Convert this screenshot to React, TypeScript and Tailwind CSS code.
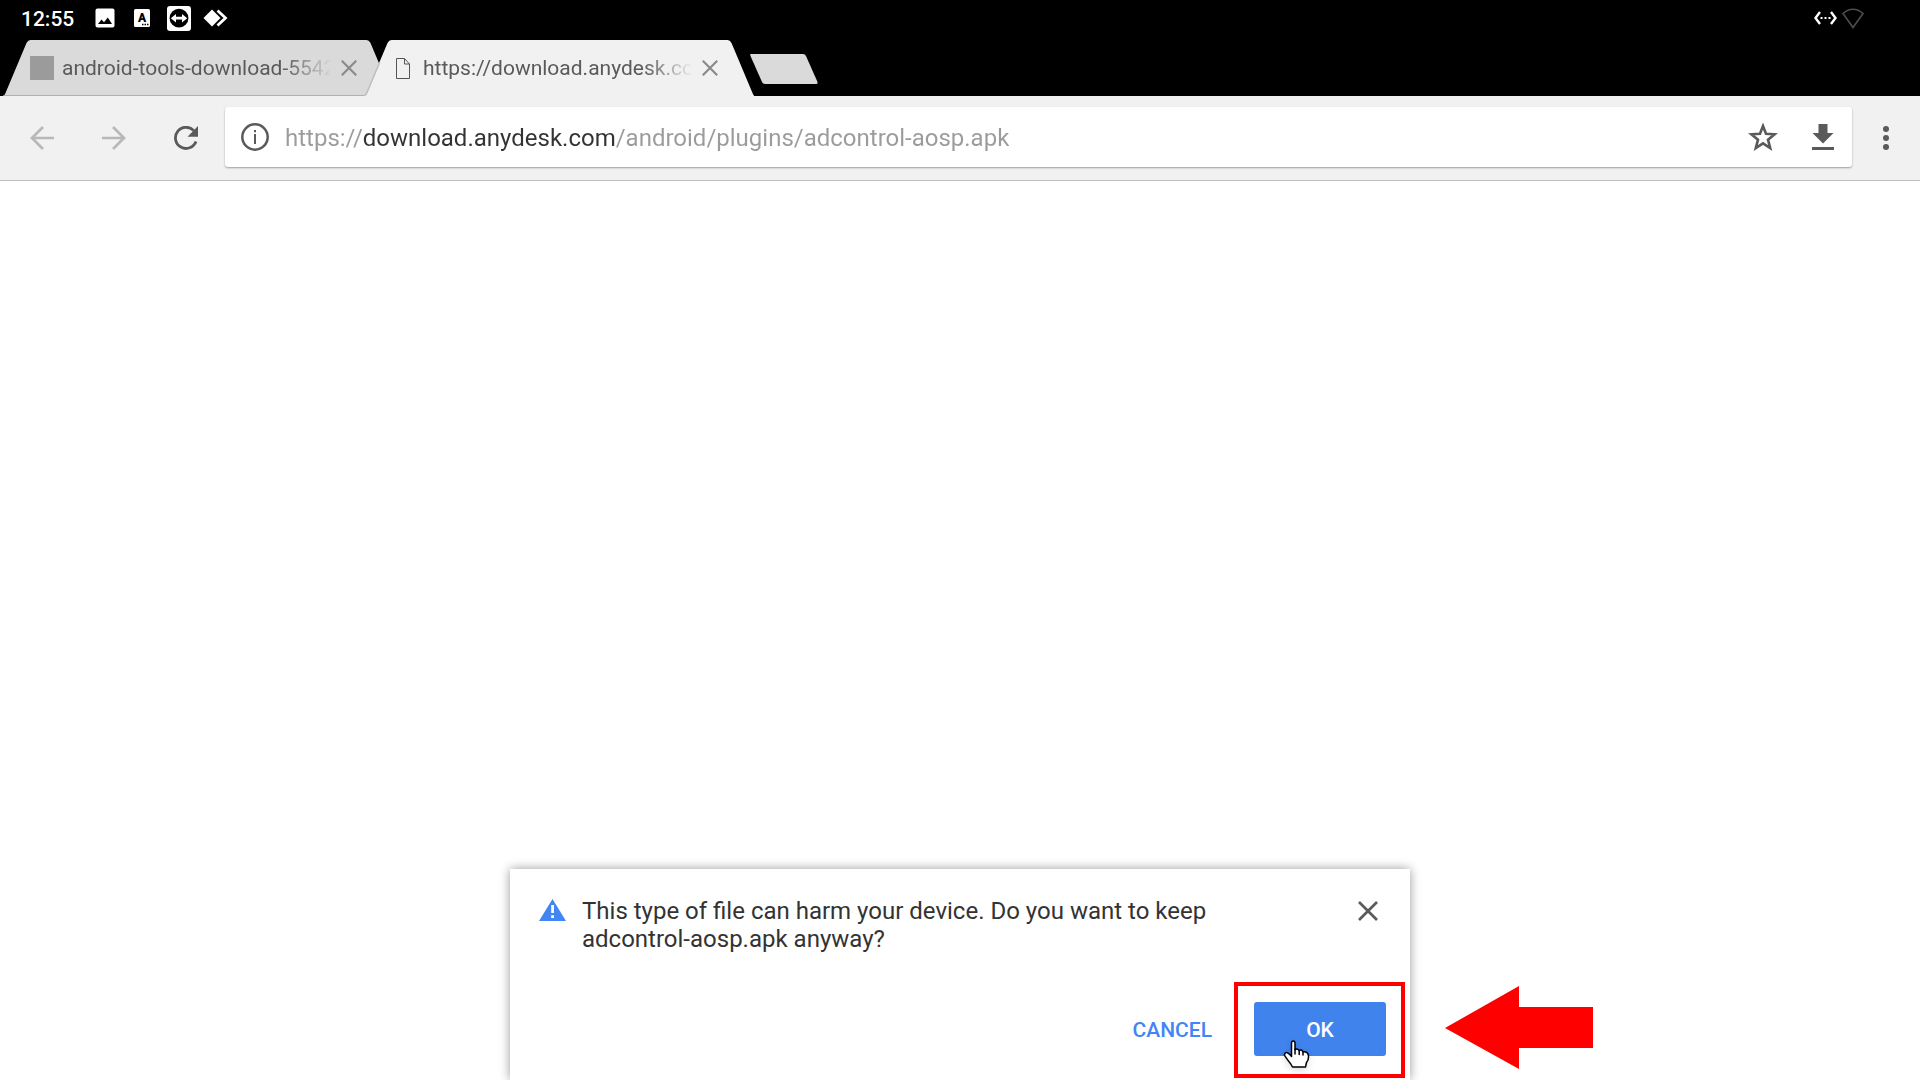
import React from "react";

function CrossIcon({ className }: { className: string }) {
  return (
    <svg viewBox="0 0 20 20" className={className} fill="none" stroke="currentColor" aria-hidden="true">
      <path d="M1 1L19 19M19 1L1 19" strokeWidth="2.7" />
    </svg>
  );
}

function StatusBar() {
  return (
    <div className="flex h-10 items-center justify-between pb-1 pl-[21px] pr-14 text-white">
      <div className="flex items-center">
        <span className="w-[74px] pt-px text-[21px] font-medium leading-6">12:55</span>
        <svg width="20" height="20" viewBox="0 0 20 20" aria-hidden="true">
          <rect x="0.5" y="0.5" width="19" height="19" rx="2" fill="#fff" />
          <path d="M3 16L6.5 11.5L9 14.2L12.8 9.5L17 16Z" fill="#000" />
        </svg>
        <svg className="ml-[19px]" width="16" height="18" viewBox="0 0 16 18" aria-hidden="true">
          <rect width="16" height="18" rx="1.5" fill="#fff" />
          <text x="8" y="13" textAnchor="middle" fontSize="12" fontWeight="900" fill="#000">
            A
          </text>
          <path d="M8 15.5h1.5M10.5 15.5h1.5M13 15.5h1.5" stroke="#000" strokeWidth="1.3" />
        </svg>
        <svg className="ml-[17px]" width="24" height="25" viewBox="0 0 24 25" aria-hidden="true">
          <rect width="24" height="25" rx="3" fill="#fff" />
          <circle cx="12" cy="12.2" r="9.4" fill="#000" />
          <path d="M3.8 12.2L9 8V10.8H15V8L20.2 12.2L15 16.4V13.6H9V16.4Z" fill="#fff" />
        </svg>
        <svg className="ml-3" width="26" height="18" viewBox="0 0 26 18" aria-hidden="true">
          <path d="M0.5 9L9 0.5L17.5 9L9 17.5Z" fill="#fff" />
          <path d="M14.5 1.5L22.5 9L14.5 16.5" stroke="#fff" strokeWidth="2.8" fill="none" />
        </svg>
      </div>
      <div className="flex items-center gap-[5px]">
        <svg width="23" height="14" viewBox="0 0 23 14" fill="none" stroke="#fff" aria-hidden="true">
          <path d="M6 1L1.5 7L6 13M17 1L21.5 7L17 13" strokeWidth="2.4" />
          <path d="M6.5 7h2M10.5 7h2M14.5 7h2" strokeWidth="2" />
        </svg>
        <svg width="22" height="21" viewBox="0 0 22 21" fill="none" stroke="#4d4d4d" aria-hidden="true">
          <path d="M1 5.5Q11 -3 21 5.5L11 19.5Z" strokeWidth="1.6" />
        </svg>
      </div>
    </div>
  );
}

function Tab({
  title,
  icon,
  active,
}: {
  title: string;
  icon: React.ReactNode;
  active?: boolean;
}) {
  return (
    <div className={active ? "relative z-10 -ml-[29px] h-14 w-[390px]" : "relative h-14 w-[390px]"}>
      <svg
        className="absolute inset-0 h-full w-full"
        viewBox="0 0 390 56"
        preserveAspectRatio="none"
        aria-hidden="true"
      >
        <path
          d="M0 56Q1.5 55.5 2.5 53L23.5 3Q25 0 27.5 0H363.5Q366 0 367.5 3L388.5 53Q389.5 55.5 391 56Z"
          fill={active ? "#f1f1f1" : "#dadada"}
        />
        {active ? (
          <path d="M0.5 55.5Q2 55 3 52.5L15.8 22" fill="none" stroke="#bdbdbd" strokeWidth="1.5" />
        ) : (
          <path d="M0.5 55.5H389" stroke="#b0b0b0" />
        )}
      </svg>
      <div className="relative flex h-full items-center pl-[27px]">
        <span className="flex size-6 shrink-0 items-center justify-center">{icon}</span>
        <span
          role="tab"
          aria-selected={!!active}
          className="ml-2 w-[268px] overflow-hidden whitespace-nowrap text-[21px] leading-7 text-[#5a5a5a] [mask-image:linear-gradient(to_right,#000_220px,transparent_270px)]"
        >
          {title}
        </span>
        <button type="button" aria-label="Close tab" className="ml-[7px] flex size-6 items-center justify-center text-[#8a8a8a]">
          <CrossIcon className="size-4" />
        </button>
      </div>
    </div>
  );
}

function TabStrip() {
  return (
    <div role="tablist" className="flex pl-[3px]">
      <Tab
        title="android-tools-download-5542"
        icon={<span className="size-6 bg-[#9b9b9b]" />}
      />
      <Tab
        active
        title="https://download.anydesk.com"
        icon={
          <svg width="14" height="21" viewBox="0 0 14 21" fill="none" stroke="#555" aria-hidden="true">
            <path d="M0.5 0.5H8.5L13.5 6V20.5H0.5Z" />
            <path d="M8.5 0.5V6H13.5" />
          </svg>
        }
      />
      <button type="button" aria-label="New tab" className="-ml-1 mt-3.5 h-[30px]">
        <svg width="68" height="30" viewBox="0 0 68 30" aria-hidden="true">
          <path d="M0.5 0H53Q55 0 56 2L67.5 28Q68 30 66 30H15Q13 30 12 28L0.5 2Q0 0 0.5 0Z" fill="#dadada" />
        </svg>
      </button>
    </div>
  );
}

const iconButton = "flex h-[72px] w-[72px] shrink-0 items-center justify-center pt-0.5";

function Toolbar() {
  return (
    <div className="flex h-[85px] items-center border-b border-[#c0c0c0] bg-[#f1f1f1] pb-0.5 pl-1.5">
      <button type="button" aria-label="Back" className={iconButton}>
        <svg width="24" height="24" viewBox="0 0 24 24" fill="none" stroke="#b8b8b8" strokeWidth="2.7" aria-hidden="true">
          <path d="M24 12H2M13 1L2 12L13 23" />
        </svg>
      </button>
      <button type="button" aria-label="Forward" className={iconButton}>
        <svg width="24" height="24" viewBox="0 0 24 24" fill="none" stroke="#b8b8b8" strokeWidth="2.7" aria-hidden="true">
          <path d="M0 12H22M11 1L22 12L11 23" />
        </svg>
      </button>
      <button type="button" aria-label="Reload" className={iconButton}>
        <svg width="24" height="24" viewBox="0 0 24 24" aria-hidden="true">
          <path d="M19.8 4.6A10.6 10.6 0 1 0 22 15.5" fill="none" stroke="#5a5a5a" strokeWidth="2.8" />
          <path d="M24 0V10.7H13.5Z" fill="#5a5a5a" />
        </svg>
      </button>
      <div className="ml-[3px] flex h-[60px] min-w-0 flex-1 items-center rounded-[3px] bg-white pl-4 shadow-[0_1px_2px_rgba(0,0,0,0.35)]">
        <button type="button" aria-label="Site information">
          <svg width="28" height="28" viewBox="0 0 28 28" aria-hidden="true">
            <circle cx="14" cy="14" r="12.7" fill="none" stroke="#5a5a5a" strokeWidth="2.5" />
            <path d="M13 7h2v2.2h-2zM13 11h2v10h-2z" fill="#5a5a5a" />
          </svg>
        </button>
        <input
          type="text"
          aria-label="Address"
          defaultValue="https://download.anydesk.com/android/plugins/adcontrol-aosp.apk"
          className="ml-4 h-8 min-w-0 flex-1 bg-[linear-gradient(to_right,#9b9b9b_77px,#333_77px,#333_331px,#9b9b9b_331px)] bg-clip-text pt-0.5 text-2xl text-transparent outline-none"
        />
        <button type="button" aria-label="Bookmark" className="flex size-[60px] items-center justify-center">
          <svg width="30" height="28" viewBox="0 0 30 28" aria-hidden="true">
            <path
              d="M15 3L18 10.8L26.6 11.3L20 16.7L22.2 25L15 20.4L7.8 25L10 16.7L3.4 11.3L12 10.8Z"
              fill="none"
              stroke="#5a5a5a"
              strokeWidth="2.6"
            />
          </svg>
        </button>
        <button type="button" aria-label="Download" className="-mr-px flex size-[60px] items-center justify-center">
          <svg width="22" height="26" viewBox="0 0 22 26" fill="#5a5a5a" aria-hidden="true">
            <path d="M6.5 0H15.5V9H21.5L11 19.5L0.5 9H6.5ZM0 23H22V26H0Z" />
          </svg>
        </button>
      </div>
      <button type="button" aria-label="Menu" className="flex h-[72px] w-[68px] shrink-0 items-center justify-center pt-0.5">
        <svg width="6" height="24" viewBox="0 0 6 24" fill="#5a5a5a" aria-hidden="true">
          <circle cx="3" cy="3" r="3" />
          <circle cx="3" cy="12" r="3" />
          <circle cx="3" cy="21" r="3" />
        </svg>
      </button>
    </div>
  );
}

function DownloadPrompt() {
  return (
    <section
      role="dialog"
      aria-labelledby="prompt-text"
      className="relative w-[900px] bg-white px-6 pb-6 pt-7 shadow-[0_0_10px_rgba(0,0,0,0.4)]"
    >
      <div className="flex items-start">
        <svg className="ml-[5px] mt-0.5 shrink-0" width="27" height="22" viewBox="0 0 27 22" aria-hidden="true">
          <path d="M13.5 0L27 22H0Z" fill="#4285f4" />
          <path d="M12.2 6h2.8v8h-2.8zM12.2 16.2h2.8v2.8h-2.8z" fill="#fff" />
        </svg>
        <p id="prompt-text" className="ml-4 w-[660px] text-2xl leading-7 text-[#333]">
          This type of file can harm your device. Do you want to keep adcontrol-aosp.apk anyway?
        </p>
        <button type="button" aria-label="Dismiss" className="ml-auto mr-2 mt-1 text-[#5a5a5a]">
          <CrossIcon className="size-5" />
        </button>
      </div>
      <div className="mt-[49px] flex justify-end">
        <button type="button" className="h-[54px] px-[42px] pt-[3px] text-[21px] font-medium text-[#4285f4]">
          CANCEL
        </button>
        <div className="relative">
          <button type="button" className="h-[54px] w-[132px] rounded-[3px] bg-[#4083ec] pt-[3px] text-[21px] font-medium text-white">
            OK
          </button>
          <div className="pointer-events-none absolute -left-5 -top-5 h-24 w-[171px] border-4 border-[#ff0000]" />
          <svg className="pointer-events-none absolute left-7 top-9 drop-shadow-md" width="30" height="32" viewBox="0 0 30 32" aria-hidden="true">
            <path
              d="M9.5 18.5V5.2Q9.5 3 11.2 3Q13 3 13 5.2V11.5Q15.5 10 17.2 12.5Q19.6 11 21 13.8Q24.8 13 26.2 16.5Q27.4 21 24.5 24.5L23.5 29H10.5L8.8 26Q5.5 22 3 18.2Q1.8 16 3.5 14.8Q5.5 13.7 9.5 18.5Z"
              fill="#fff"
              stroke="#000"
              strokeWidth="1.5"
              strokeLinejoin="round"
            />
            <path d="M13 11V16M17.2 12.5V16.5M21 13.8V17" stroke="#000" strokeWidth="1.5" strokeLinecap="round" />
          </svg>
        </div>
      </div>
      <svg className="absolute bottom-[11px] left-[935px]" width="148" height="83" viewBox="0 0 148 83" aria-hidden="true">
        <path d="M0 42L74 0V21H148V62H74V83Z" fill="#ff0000" />
      </svg>
    </section>
  );
}

export default function App() {
  return (
    <div className="flex min-h-screen flex-col overflow-hidden bg-white font-[Roboto,sans-serif]">
      <header className="bg-black">
        <StatusBar />
        <TabStrip />
        <Toolbar />
      </header>
      <main className="flex flex-1 items-end justify-center">
        <DownloadPrompt />
      </main>
    </div>
  );
}
